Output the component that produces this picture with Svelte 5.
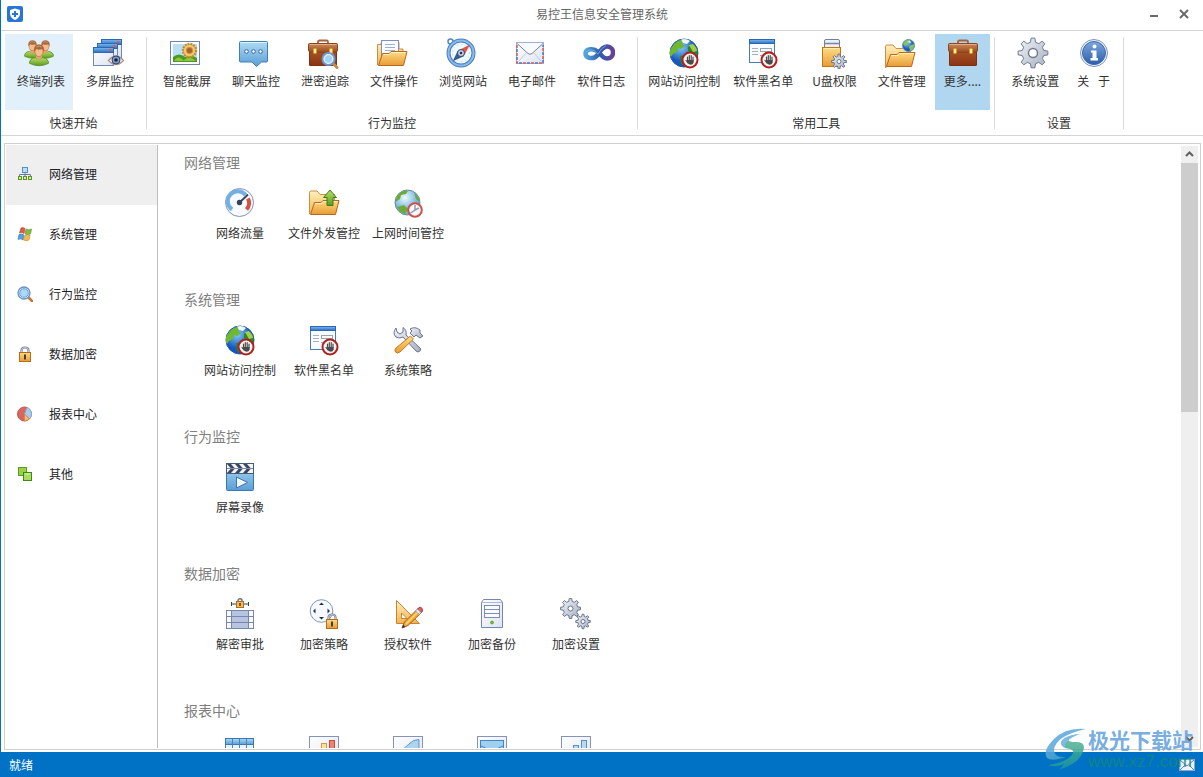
<script>
	const groups = [
		{
			title: '快速开始',
			items: [
				{ icon: 'users', label: '终端列表', state: 'hot' },
				{ icon: 'screens', label: '多屏监控' }
			]
		},
		{
			title: '行为监控',
			items: [
				{ icon: 'picture', label: '智能截屏' },
				{ icon: 'chat', label: '聊天监控' },
				{ icon: 'caseSearch', label: '泄密追踪' },
				{ icon: 'folderDoc', label: '文件操作' },
				{ icon: 'compass', label: '浏览网站' },
				{ icon: 'mail', label: '电子邮件' },
				{ icon: 'infinity', label: '软件日志' }
			]
		},
		{
			title: '常用工具',
			items: [
				{ icon: 'globeStop', label: '网站访问控制', fit: 'tight' },
				{ icon: 'windowStop', label: '软件黑名单', fit: 'tight' },
				{ icon: 'usb', label: 'U盘权限' },
				{ icon: 'folderGlobe', label: '文件管理' },
				{ icon: 'case', label: '更多....', fit: 'even', state: 'active' }
			]
		},
		{
			title: '设置',
			items: [
				{ icon: 'gear', label: '系统设置' },
				{ icon: 'info', label: '关\u2002 于', fit: 'even' }
			]
		}
	];

	const sections = [
		{
			title: '网络管理',
			icon: 'network',
			items: [
				{ icon: 'gauge', label: '网络流量' },
				{ icon: 'folderUp', label: '文件外发管控' },
				{ icon: 'globeClock', label: '上网时间管控' }
			]
		},
		{
			title: '系统管理',
			icon: 'flag',
			items: [
				{ icon: 'globeStop', label: '网站访问控制' },
				{ icon: 'windowStop', label: '软件黑名单' },
				{ icon: 'tools', label: '系统策略' }
			]
		},
		{
			title: '行为监控',
			icon: 'search',
			items: [{ icon: 'clapper', label: '屏幕录像' }]
		},
		{
			title: '数据加密',
			icon: 'lock',
			items: [
				{ icon: 'lockTable', label: '解密审批' },
				{ icon: 'lockPolicy', label: '加密策略' },
				{ icon: 'ruler', label: '授权软件' },
				{ icon: 'server', label: '加密备份' },
				{ icon: 'gears', label: '加密设置' }
			]
		},
		{
			title: '报表中心',
			icon: 'pie',
			items: [
				{ icon: 'table', label: '' },
				{ icon: 'barsWarm', label: '' },
				{ icon: 'area', label: '' },
				{ icon: 'mailChart', label: '' },
				{ icon: 'barsBlue', label: '' }
			]
		}
	];

	const tabs = [...sections.map(({ title, icon }) => ({ title, icon })), { title: '其他', icon: 'squares' }];

	let selected = $state(0);
	let pane;

	function scroll(dy) {
		pane.scrollBy({ top: dy });
	}

	function cog(cx, cy, outer, inner, teeth) {
		const pts = [];
		const step = (Math.PI * 2) / teeth;
		for (let i = 0; i < teeth; i++) {
			const a = i * step - Math.PI / 2;
			for (const [k, r] of [[-0.3, inner], [-0.16, outer], [0.16, outer], [0.3, inner]]) {
				pts.push(`${(cx + r * Math.cos(a + k * step)).toFixed(2)},${(cy + r * Math.sin(a + k * step)).toFixed(2)}`);
			}
		}
		return pts.join(' ');
	}
</script>

{#snippet briefcase()}
	<path d="M11 7V5Q11 3.500 12.500 3.500H19.500Q21 3.500 21 5V7" fill="none" stroke="#a5633c" stroke-width="1.800" />
	<path d="M2.500 14H29.500V28Q29.500 28.500 29 28.500H3Q2.500 28.500 2.500 28Z" fill="url(#leather)" stroke="#7d3013" />
	<path d="M1.500 7.500Q1.500 6.500 2.500 6.500H29.500Q30.500 6.500 30.500 7.500V13Q30.500 15.500 27 15.500H5Q1.500 15.500 1.500 13Z" fill="url(#flap)" stroke="#8b4521" />
	<path d="M3 7.500H29" stroke="#e6ab7e" />
	<rect x="6.500" y="11.500" width="3" height="5" rx="1" fill="#fff0a0" stroke="#e39a20" />
	<rect x="22.500" y="11.500" width="3" height="5" rx="1" fill="#fff0a0" stroke="#e39a20" />
{/snippet}

{#snippet person(x, y, s)}
	<g transform="translate({x} {y}) scale({s})">
		<path d="M-10 14Q-10 9 -4 8L0 10L4 8Q10 9 10 14Q5 16.500 0 16.500T-10 14Z" fill="url(#green)" stroke="#5c9028" />
		<path d="M-3 5V8.500L0 11L3 8.500V5Z" fill="#e9a36e" />
		<ellipse cx="0" cy="1.500" rx="4.300" ry="5.500" fill="#f5bd8d" stroke="#b3744a" stroke-width=".7" />
		<path d="M-5 2Q-6.500 -5.500 0 -6Q6.500 -5.500 5 2L3.500 -1Q0 .5 -3 -1Z" fill="#a9683c" />
		<path d="M-3 -3Q0 -5.500 3 -3" fill="none" stroke="#d09a6c" />
	</g>
{/snippet}

{#snippet stop()}
	<circle cx="22" cy="23" r="7.500" fill="#f4f4f4" stroke="#b2201c" stroke-width="2" />
	<path d="M19.500 24V20M21.300 23V18.500M23.200 23V18.700M25 24V20M18 23.500L20 26" stroke="#4a4a4a" stroke-width="1.200" stroke-linecap="round" />
	<path d="M19 23H25.600V25.500Q25 27.800 22.500 27.800Q20.500 27.500 19 25Z" fill="#4a4a4a" />
{/snippet}

{#snippet padlock(x, y)}
	<g transform="translate({x} {y})">
		<path d="M2.500 6V4.500Q2.500 1.500 6 1.500T9.500 4.500V6" fill="none" stroke="#76839c" stroke-width="2.200" />
		<path d="M2.500 6V4.500Q2.500 1.500 6 1.500T9.500 4.500V6" fill="none" stroke="#d3dae6" stroke-width=".8" />
		<rect x=".5" y="6.500" width="11" height="9" fill="url(#gold)" stroke="#b56a16" />
		<rect x="5" y="8.500" width="2" height="5" fill="#443d38" />
	</g>
{/snippet}

{#snippet folderBack()}
	<path d="M1.500 28V6.500Q1.500 5 3 5H9L12 8.500H26.500V16" fill="url(#paleGold)" stroke="#cf8d42" />
{/snippet}

{#snippet folderFront()}
	<path d="M6.500 16.500H13L15 14.500H31L27.500 28.500H2.500Z" fill="url(#gold)" stroke="#b9671c" stroke-linejoin="round" />
	<path d="M7.500 17.500H13.500L15.500 15.500H29.500" fill="none" stroke="#fff0bd" />
{/snippet}

{#snippet icon(name)}
	<svg class="icon" viewBox="0 0 32 32" aria-hidden="true">
		{#if name === 'users'}
			{@render person(9.5, 8, 0.8)}
			{@render person(22.5, 8, 0.8)}
			{@render person(16, 13, 0.95)}
		{:else if name === 'screens'}
			{#each [[9, 2], [5, 6], [1, 10]] as [x, y]}
				<rect x={x + 0.5} y={y + 0.5} width="20" height="18" fill="url(#paper)" stroke="#6c8ab4" />
				<rect x={x + 0.5} y={y + 0.5} width="20" height="5" fill="url(#bar)" stroke="#2b68b8" />
				<rect x={x + 16} y={y + 2} width="2.500" height="2" fill="#f0563a" />
			{/each}
			<path d="M16.500 23.500Q24 14.500 31.500 23.500Q24 31.500 16.500 23.500Z" fill="#eef2f8" stroke="#a78f86" stroke-width="1.300" />
			<circle cx="24" cy="23" r="4" fill="#7f9ccb" stroke="#344665" />
			<circle cx="24" cy="23" r="1.800" fill="#15223c" />
		{:else if name === 'picture'}
			<rect x="1.500" y="4.500" width="29" height="23" fill="#fff" stroke="#7283ae" />
			<rect x="4" y="7" width="24" height="18" fill="#b9e0f4" />
			<path d="M4 20Q10 15 16 20Q22 17 28 21V25H4Z" fill="#4a9a1f" />
			<path d="M5 24Q9 17 15 24M14 24Q20 17 27 24" fill="#8cc63e" />
			<circle cx="20.500" cy="13.500" r="6.500" fill="#e9b54d" stroke="#c28a35" stroke-width="2.500" stroke-dasharray="1.800 1" />
			<circle cx="20.500" cy="13.500" r="5.500" fill="#f4cb6a" />
			<circle cx="20.500" cy="13.500" r="3.200" fill="#a8642a" stroke="#d3944a" />
		{:else if name === 'chat'}
			<path d="M2.500 4.500H28.500Q29.500 4.500 29.500 5.500V24Q29.500 25 28.500 25H23.500L18.500 29.500L14 25H2.500Q1.500 25 1.500 24V5.500Q1.500 4.500 2.500 4.500Z" fill="url(#sky)" stroke="#3f80b7" />
			<path d="M2.500 5.500H28.500" stroke="#def4fd" />
			{#each [8.5, 15.5, 22.5] as x}
				<circle cx={x} cy="14.500" r="1.800" fill="#fff" stroke="#33669d" />
			{/each}
		{:else if name === 'case'}
			{@render briefcase()}
		{:else if name === 'caseSearch'}
			{@render briefcase()}
			<path d="M26 26.500L30 30.500" stroke="#c88a4c" stroke-width="3" stroke-linecap="round" />
			<circle cx="21.500" cy="22" r="6" fill="#c4ebfd" stroke="#6f97cf" stroke-width="2" />
			<circle cx="21.500" cy="22" r="4.300" fill="#9fd4f5" stroke="#e9f8ff" />
		{:else if name === 'folderDoc'}
			<path d="M1.500 28V7.500H5V5.500H23V12H27V16" fill="url(#paleGold)" stroke="#cf8d42" />
			<rect x="5.500" y="3.500" width="17" height="19" fill="#fafcff" stroke="#7a91c5" />
			<path d="M9 7.500H19M9 10.500H19M9 13.500H19M9 16.500H19" stroke="#9bb0d8" />
			{@render folderFront()}
		{:else if name === 'compass'}
			<circle cx="5.500" cy="4.500" r="2.500" fill="none" stroke="#5688c4" stroke-width="1.500" />
			<circle cx="16" cy="16" r="12.500" fill="#eef8fd" stroke="#4a7fc2" stroke-width="4" />
			<circle cx="16" cy="16" r="12.500" fill="none" stroke="#8bbce8" stroke-width="2" />
			<circle cx="16" cy="16" r="8.500" fill="none" stroke="#b1d4eb" stroke-dasharray="1 3" />
			<path d="M24 8.500L19 18L14 13.500Z" fill="#ef5143" stroke="#c62d24" stroke-width=".6" />
			<path d="M8.500 23.500L13 14L18.500 19Z" fill="#375d96" stroke="#1c3966" stroke-width=".6" />
			<circle cx="16" cy="16" r="3.500" fill="#c5d0e2" stroke="#384a6d" />
			<circle cx="16" cy="16" r="1.300" fill="#26344f" />
		{:else if name === 'mail'}
			<rect x="2.500" y="5.500" width="27" height="21" fill="url(#paper)" stroke="#a3afcf" />
			<path d="M3 8V26H29V8" fill="none" stroke="#db5a54" stroke-width="1.500" stroke-dasharray="3 5" />
			<path d="M3 8V26H29V8" fill="none" stroke="#4d78c0" stroke-width="1.500" stroke-dasharray="3 5" stroke-dashoffset="-4" />
			<path d="M5 24L12 16M27 24L20 16" stroke="#c3cbe0" />
			<path d="M3 6.500L14 16.500Q16 18 18 16.500L29 6.500" fill="#fbfcff" stroke="#76829f" />
		{:else if name === 'infinity'}
			<path d="M14.500 14.500C11 11 2.500 11.500 2.500 16.500C2.500 22 11 22.500 14.500 18C18 13 20 9.500 24 9.500C28 9.500 30 12.500 30 15.500C30 19 27.500 21.500 24 21.500C20 21.500 18 18 15.500 15" fill="none" stroke="url(#violet)" stroke-width="4.500" stroke-linecap="round" stroke-linejoin="round" />
			<path d="M3 15Q6 11.500 11 13.500L15 17Q18 11 23 8.500" fill="none" stroke="#97c8f2" stroke-opacity=".6" />
		{:else if name === 'globeStop'}
			<circle cx="16" cy="16" r="14" fill="url(#ocean)" stroke="#1d55ad" />
			<path d="M4 10Q8 3 15 3L14 7L17 9L13 12L10 11L9 15L5 17L3 20Q0 15 4 10Z" fill="#70b82c" />
			<path d="M13 2.500Q18 1 22 4L19 7L15 6Z" fill="#eff8e7" />
			<path d="M20 10L25 7Q31 12 29.500 18L24 17L20 14ZM12 19L18 18L21 22L17 29L13 27Z" fill="#2f8424" />
			<path d="M21 8L25 7Q29 11 29 14L25 15Z" fill="#a0cf4b" />
			{@render stop()}
		{:else if name === 'windowStop'}
			<rect x="2.500" y="2.500" width="25" height="23" fill="#f9fcff" stroke="#477ab6" />
			<rect x="2.500" y="2.500" width="25" height="4" fill="url(#bar)" stroke="#2866b6" />
			<path d="M5 11.500H11M5 14.500H11M5 17.500H11" stroke="#a9b0bb" />
			<rect x="13.500" y="11.500" width="11" height="3" fill="#fff" stroke="#9aa2b0" />
			<path d="M13 18.500H17" stroke="#9aa2b0" />
			{@render stop()}
		{:else if name === 'usb'}
			<rect x="7.500" y="2.500" width="15" height="9" rx="1.500" fill="#edf0f5" stroke="#7180a0" />
			<path d="M8 6.500H22" stroke="#7585a7" stroke-width="1.500" />
			<rect x="5.500" y="10.500" width="18" height="19" fill="url(#gold)" stroke="#c27812" />
			<path d="M7 11.500H22" stroke="#fff0af" />
			<polygon points={cog(22, 24.5, 7.5, 5, 8)} fill="url(#steel)" stroke="#6a7691" />
			<circle cx="22" cy="24.500" r="2" fill="#fff" stroke="#6a7691" />
		{:else if name === 'folderGlobe'}
			<g transform="translate(0 3)">{@render folderBack()}</g>
			<circle cx="24.500" cy="8.500" r="6" fill="url(#ocean)" stroke="#5d93b4" />
			<path d="M19 7Q22 2 26 3L24 7L21 9ZM25 9L30 7Q31 12 26 14Z" fill="#8cc05a" />
			<path d="M23 5L26 3.500L27 6Z" fill="#e5f2d8" />
			<g transform="translate(0 1)">{@render folderFront()}</g>
		{:else if name === 'gear'}
			<polygon points={cog(16, 16, 15, 11, 8)} fill="url(#steel)" stroke="#727b8e" stroke-linejoin="round" />
			<circle cx="16" cy="16" r="4.500" fill="#fff" stroke="#727b8e" stroke-width="1.500" />
		{:else if name === 'info'}
			<circle cx="16" cy="16" r="13.500" fill="#eff3fa" stroke="#7f93c1" />
			<circle cx="16" cy="16" r="11.500" fill="url(#infoBlue)" stroke="#3c69ad" />
			<circle cx="16.500" cy="9.500" r="2" fill="#fff" />
			<path d="M13 13.500H18.500V21H20V23.500H12.500V21H14.500V15.500H13Z" fill="#fff" />
		{:else if name === 'gauge'}
			<circle cx="15.500" cy="15.500" r="14" fill="#f7faff" stroke="#8493b9" />
			<path d="M8 22.500A10 10 0 1 1 21.500 8" fill="none" stroke="#72afe3" stroke-width="4" />
			<path d="M24 11.500A10 10 0 0 1 22.500 22.500" fill="none" stroke="#d75043" stroke-width="4" />
			<path d="M15.500 15.500L24 7.500" stroke="#384761" stroke-width="2" />
			<circle cx="15.500" cy="15.500" r="2.700" fill="#35425c" />
		{:else if name === 'folderUp'}
			<g transform="translate(0 -1)">{@render folderBack()}{@render folderFront()}</g>
			<path d="M22 3L28.500 10.500H25V18.500H19V10.500H15.500Z" fill="url(#green)" stroke="#3f7e17" stroke-linejoin="round" />
		{:else if name === 'globeClock'}
			<circle cx="15.500" cy="15.500" r="12.500" fill="url(#paleOcean)" stroke="#628a9f" />
			<path d="M5 9Q10 3 16 4L14 7L9 8L8 12L3.500 15ZM22 6Q27 9 27.500 15L24 12ZM5 20L12 18L16 22L13 27Q7 25 5 20Z" fill="#6eaa36" />
			<circle cx="23" cy="23" r="6.800" fill="#faf8fb" stroke="#c9524e" stroke-width="2" />
			<path d="M23 18V23L18.500 26M23 23L27 21" fill="none" stroke="#8e9cb5" stroke-width="1.500" />
		{:else if name === 'tools'}
			<path d="M4 4Q0 9 4 13Q7 15 11 13L24 27Q26 29 28 27T27 23L14 11Q15 6 11 3.500L11 8L8 10L5 8Z" fill="url(#steel)" stroke="#6b7590" />
			<path d="M18 5Q23 2 28 6L28 9L31 12L28 14L24 11L22 13L18 9L20 7Z" fill="url(#steel)" stroke="#6b7590" stroke-linejoin="round" />
			<path d="M18.500 12L21.500 15L8 28Q5 30 3.500 28T4 24Z" fill="url(#gold)" stroke="#c57b19" />
		{:else if name === 'clapper'}
			<rect x="2.500" y="2.500" width="27" height="27" rx="1" fill="url(#sky)" stroke="#3977b2" />
			<rect x="2.500" y="2.500" width="27" height="10" fill="#f2f5fa" stroke="#465a7b" />
			{#each [3, 11, 19] as x}
				<path d="M{x} 3H{x + 4}L{x + 8} 7.500L{x + 4} 12H{x}L{x + 4} 7.500Z" fill="#3b475f" />
			{/each}
			<path d="M3 7.500H29" stroke="#7f8da8" />
			<path d="M12.500 16V27L23.500 21.500Z" fill="#f3f8fd" stroke="#3b74b1" />
		{:else if name === 'lockTable'}
			<rect x="2.500" y="12.500" width="27" height="18" fill="#f8faff" stroke="#7386b0" />
			<rect x="7.500" y="12.500" width="17" height="18" fill="#b7c4df" stroke="#7386b0" />
			<path d="M2 18.500H30M2 24.500H30" stroke="#7386b0" />
			<path d="M7.500 4V8M24.500 4V8M8 6H12M20 6H24" stroke="#344057" />
			<path d="M14 4V2.500Q14 .8 16 .8T18 2.500V4" fill="none" stroke="#6b7788" stroke-width="1.500" />
			<rect x="12.500" y="3.500" width="7" height="6" fill="#f3bc5d" stroke="#b76a18" />
			<path d="M16 5V8" stroke="#443d38" stroke-width="1.500" />
		{:else if name === 'lockPolicy'}
			<circle cx="13.500" cy="13" r="11.300" fill="#f6f9ff" stroke="#8495bb" />
			<path d="M11 7H16L13.500 4.500ZM11 19H16L13.500 21.500ZM7.500 10.500V15.500L5 13ZM19.500 10.500V15.500L22 13Z" fill="#253148" />
			{@render padlock(18, 15)}
		{:else if name === 'ruler'}
			<path d="M4.500 2.500V25.500H27.500ZM9.500 15V20.500H15Z" fill="url(#paleGold)" fill-rule="evenodd" stroke="#c78437" />
			<path d="M10 30L12.500 24L26 10.500Q29.500 9 30 14L16 27.500Z" fill="#f1aa35" stroke="#a45e28" />
			<path d="M14 26L26 14" stroke="#ffd97a" stroke-width="1.500" />
			<path d="M25.500 11L27 9.500Q30.500 8.500 30.500 13L29 14.500Z" fill="#db635d" stroke="#a93e40" />
			<path d="M23.500 13L25.500 11L29 14.500L27.500 16.500Z" fill="#dfe4ee" stroke="#8b94ab" stroke-width=".6" />
			<path d="M10 30L11 26.500L13.500 29Z" fill="#31394c" />
		{:else if name === 'server'}
			<path d="M5.500 4.500L7.500 1.500H24.500L26.500 4.500V29.500H5.500Z" fill="url(#paper)" stroke="#7586b0" />
			<path d="M6 4.500H26" stroke="#adb9d5" />
			<rect x="8.500" y="7.500" width="15" height="12" fill="#f9fbff" stroke="#7e8db5" />
			<path d="M9 11.500H23M9 15.500H23" stroke="#7e8db5" />
			<circle cx="16" cy="24.500" r="1.500" fill="#7dbf2b" stroke="#4e8a1a" stroke-width=".6" />
		{:else if name === 'gears'}
			<polygon points={cog(10.5, 10.5, 10, 7.3, 8)} fill="url(#steel)" stroke="#69748d" />
			<circle cx="10.500" cy="10.500" r="2.500" fill="#fff" stroke="#69748d" />
			<polygon points={cog(23, 23.5, 7.3, 5.2, 8)} fill="url(#steel)" stroke="#69748d" />
			<circle cx="23" cy="23.500" r="2" fill="#fff" stroke="#69748d" />
		{:else if name === 'table'}
			<rect x="1.500" y="3.500" width="28" height="26" fill="#e8f4fc" stroke="#417cb9" />
			<rect x="1.500" y="3.500" width="28" height="6" fill="url(#sky)" stroke="#3977b8" />
			<path d="M8.500 4V29M15.500 4V29M22.500 4V29M2 16.500H29M2 22.500H29" stroke="#4884bd" />
		{:else}
			<rect x="1.500" y="1.500" width="29" height="28" fill="url(#paper)" stroke="#8492bc" />
			{#if name === 'barsWarm'}
				<rect x="5.500" y="13.500" width="5" height="13" fill="#a9d36a" stroke="#74a536" />
				<rect x="13.500" y="8.500" width="5" height="18" fill="#ffe09a" stroke="#d09b42" />
				<rect x="21.500" y="5.500" width="5" height="21" fill="#ef8078" stroke="#c94840" />
			{:else if name === 'barsBlue'}
				<rect x="5.500" y="15.500" width="5" height="11" fill="#b8dbf3" stroke="#5b8fc4" />
				<rect x="13.500" y="10.500" width="5" height="16" fill="#b8dbf3" stroke="#5b8fc4" />
				<rect x="21.500" y="5.500" width="5" height="21" fill="#b8dbf3" stroke="#5b8fc4" />
			{:else if name === 'area'}
				<path d="M4 26V17Q12 15 17 9Q21 4.500 27 4.500V26Z" fill="#add4ef" stroke="#5d97c8" />
			{:else}
				<rect x="4.500" y="5.500" width="23" height="20" fill="#9fd1ef" stroke="#4685c3" />
				<path d="M5 11L16 16L27 11" fill="none" stroke="#4685c3" />
			{/if}
		{/if}
	</svg>
{/snippet}

{#snippet smallIcon(name)}
	<svg class="small" viewBox="0 0 16 16" aria-hidden="true">
		{#if name === 'network'}
			<path d="M8 6V9M2.500 11V8.500H13.500V11M8 8V11" fill="none" stroke="#6e7c92" />
			<rect x="5.500" y="1.500" width="5" height="5" fill="#b8e1ff" stroke="#4f90d4" />
			<rect x="1.500" y="10.500" width="3" height="3" fill="#d2f1a2" stroke="#5c9428" />
			<rect x="6.500" y="10.500" width="3" height="3" fill="#d2f1a2" stroke="#5c9428" />
			<rect x="11.500" y="10.500" width="3" height="3" fill="#d2f1a2" stroke="#5c9428" />
		{:else if name === 'flag'}
			<path d="M4 2Q6 1 8 2.500L7 7.500Q5 6 2.500 7Z" fill="#e45848" stroke="#b83b31" stroke-width=".6" />
			<path d="M9 3Q11.500 4.500 14.500 3L13.500 8Q11 9 8 8Z" fill="#82bd3a" stroke="#5a8e25" stroke-width=".6" />
			<path d="M2 8.500Q4 7.500 7 9L6 14Q3.500 12 1 13.500Z" fill="#4fa1e5" stroke="#3773b6" stroke-width=".6" />
			<path d="M8 9Q10 10.500 13 9L12 14Q9.500 15.500 6.500 14Z" fill="#f8b94b" stroke="#c7852d" stroke-width=".6" />
		{:else if name === 'search'}
			<path d="M11.500 11.500L15 15" stroke="#c57735" stroke-width="2.500" stroke-linecap="round" />
			<circle cx="7" cy="7" r="6" fill="#e6f7ff" stroke="#6c8fc8" stroke-width="1.300" />
			<circle cx="7" cy="7" r="4.300" fill="#a9dafa" stroke="#7099d0" />
		{:else if name === 'lock'}
			<g transform="translate(2 0)">{@render padlock(0, 0)}</g>
		{:else if name === 'pie'}
			<circle cx="7.500" cy="8" r="7" fill="#d9665e" stroke="#b85d58" />
			<path d="M7.500 8L10 1.500A7 7 0 0 1 12.500 13Z" fill="#a4cdee" stroke="#8aa9c8" stroke-width=".7" />
			<path d="M7.500 8L12.500 13Q10 15 7.500 15Z" fill="#f5ba72" stroke="#cf854c" stroke-width=".7" />
		{:else}
			<rect x="1.500" y="1.500" width="8" height="8" fill="#9bd03f" stroke="#5a9e2a" />
			<rect x="6.500" y="6.500" width="8" height="8" fill="#a9dc5c" stroke="#3b8b1c" />
			<path d="M8 8H13" stroke="#ddf4ae" />
		{/if}
	</svg>
{/snippet}

<svg class="defs" aria-hidden="true">
	<defs>
		<linearGradient id="leather" x2="0" y2="1"><stop stop-color="#a95227" /><stop offset="1" stop-color="#8a3512" /></linearGradient>
		<linearGradient id="flap" x2="0" y2="1"><stop stop-color="#d18a58" /><stop offset="1" stop-color="#96491f" /></linearGradient>
		<linearGradient id="green" x2="0" y2="1"><stop stop-color="#b9df64" /><stop offset="1" stop-color="#5c9c24" /></linearGradient>
		<linearGradient id="gold" x2="0" y2="1"><stop stop-color="#ffdc85" /><stop offset="1" stop-color="#e89b35" /></linearGradient>
		<linearGradient id="paleGold" x2="0" y2="1"><stop stop-color="#fff0bd" /><stop offset="1" stop-color="#f0b451" /></linearGradient>
		<linearGradient id="paper" x2="1" y2="1"><stop stop-color="#fff" /><stop offset="1" stop-color="#dce3f1" /></linearGradient>
		<linearGradient id="bar" x2="0" y2="1"><stop stop-color="#82b9ee" /><stop offset="1" stop-color="#276fc4" /></linearGradient>
		<linearGradient id="sky" x2="0" y2="1"><stop stop-color="#aedbf4" /><stop offset="1" stop-color="#5b9ed5" /></linearGradient>
		<linearGradient id="steel" x2="1" y2="1"><stop stop-color="#f0f3f8" /><stop offset="1" stop-color="#a7b0c1" /></linearGradient>
		<linearGradient id="violet"><stop stop-color="#51a6dc" /><stop offset=".5" stop-color="#2f5fb0" /><stop offset="1" stop-color="#684099" /></linearGradient>
		<linearGradient id="infoBlue" x2="0" y2="1"><stop stop-color="#7ca8de" /><stop offset="1" stop-color="#2d5cab" /></linearGradient>
		<linearGradient id="swirl" x2="1" y2="1"><stop stop-color="#5ba6e5" /><stop offset=".5" stop-color="#5aa6d8" /><stop offset="1" stop-color="#18a06c" /></linearGradient>
		<linearGradient id="swirlGreen" x2="0" y2="1"><stop stop-color="#5cba8c" /><stop offset="1" stop-color="#1d96a0" /></linearGradient>
		<radialGradient id="ocean" cx=".4" cy=".3"><stop stop-color="#83cbf5" /><stop offset="1" stop-color="#1657bd" /></radialGradient>
		<radialGradient id="paleOcean" cx=".4" cy=".3"><stop stop-color="#edfaff" /><stop offset="1" stop-color="#75b4db" /></radialGradient>
	</defs>
</svg>

<div class="window">
	<header>
		<svg class="logo" viewBox="0 0 16 16" aria-hidden="true">
			<rect width="16" height="16" rx="2" fill="#2877d4" />
			<path d="M8 2.500L13 4V8Q12.500 12 8 14Q3.500 12 3 8V4Z" fill="#fff" />
			<path d="M8 5V11M5 8H11" stroke="#2877d4" stroke-width="2" />
		</svg>
		<h1>易控王信息安全管理系统</h1>
		<div class="controls">
			<button aria-label="最小化"><svg viewBox="0 0 12 12"><path d="M2 8H10" /></svg></button>
			<button aria-label="关闭"><svg viewBox="0 0 12 12"><path d="M2 2L10 10M10 2L2 10" /></svg></button>
		</div>
	</header>

	<nav class="ribbon">
		{#each groups as group}
			<section class="group">
				<div class="commands">
					{#each group.items as item}
						<button class="command {item.state ?? ''} {item.fit ?? ''}">
							{@render icon(item.icon)}
							<span>{item.label}</span>
						</button>
					{/each}
				</div>
				<div class="caption">{group.title}</div>
			</section>
		{/each}
	</nav>

	<main>
		<aside>
			{#each tabs as tab, i}
				<button class="tab" class:selected={selected === i} onclick={() => (selected = i)}>
					{@render smallIcon(tab.icon)}
					<span>{tab.title}</span>
				</button>
			{/each}
		</aside>

		<div class="pane" bind:this={pane}>
			{#each sections as section}
				<section class="block">
					<h2>{section.title}</h2>
					<div class="tiles">
						{#each section.items as item}
							<button class="tile">
								{@render icon(item.icon)}
								<span>{item.label}</span>
							</button>
						{/each}
					</div>
				</section>
			{/each}
		</div>

		<div class="scrollbar">
			<button aria-label="向上滚动" onclick={() => scroll(-137)}><svg viewBox="0 0 17 17"><path d="M5 10L8.500 6.500L12 10" /></svg></button>
			<div class="track"><div class="thumb"></div></div>
			<button aria-label="向下滚动" onclick={() => scroll(137)}><svg viewBox="0 0 17 17"><path d="M5 7L8.500 10.500L12 7" /></svg></button>
		</div>
	</main>

	<footer>
		<span>就绪</span>
		<svg viewBox="0 0 16 12" aria-hidden="true">
			<rect x=".5" y=".5" width="15" height="11" fill="#edf2fb" stroke="#8ea4c7" />
			<path d="M1 1L8 7L15 1M1 11L6 6M15 11L10 6" fill="none" stroke="#6a7d9f" />
		</svg>
	</footer>

	<div class="watermark">
		<svg viewBox="0 0 44 42" aria-hidden="true">
			<path d="M42 1Q22 -1 10 11Q-2 23 3 30Q8 34 22 29Q10 30 10 22Q11 8 42 1Z" fill="url(#swirl)" />
			<path d="M36 6Q18 8 17 15Q17 20 26 21Q32 23 27 28Q20 35 4 37Q12 40 20 36L16 41Q32 37 38 26Q44 14 32 14Q23 14 25 11Q27 8 36 6Z" fill="url(#swirlGreen)" />
			<path d="M36 6Q18 8 17 15Q17 18 21 19Q20 12 36 6Z" fill="#6aade4" />
		</svg>
		<div>
			<strong>极光下载站</strong>
			<span>www.xz7.com</span>
		</div>
	</div>
</div>

<style>
	:global(body) {
		margin: 0;
	}

	.window {
		position: relative;
		box-sizing: border-box;
		display: flex;
		flex-direction: column;
		height: 100vh;
		overflow: hidden;
		border-left: 1px solid #0072c6;
		background: #fff;
		color: #333;
		font: 12px/16px 'Noto Sans CJK SC', sans-serif;
	}

	button {
		padding: 0;
		border: 0;
		background: none;
		color: inherit;
		font: inherit;
	}

	.defs {
		position: absolute;
		width: 0;
		height: 0;
	}

	.icon {
		display: block;
		width: 32px;
		height: 32px;
	}

	header {
		display: grid;
		grid-template-columns: 1fr auto 1fr;
		align-items: center;
		flex: none;
		box-sizing: border-box;
		height: 31px;
		padding: 0 6px 2px;
		border-bottom: 1px solid #d5d5d5;
	}

	.logo {
		width: 16px;
		height: 16px;
	}

	h1 {
		margin: 0;
		font-size: 12px;
		font-weight: 400;
		color: #666;
	}

	.controls {
		display: flex;
		justify-content: flex-end;
		gap: 18px;
		padding-right: 7px;
	}

	.controls button,
	.controls svg {
		display: block;
		width: 12px;
		height: 12px;
	}

	.controls path {
		fill: none;
		stroke: #6a6a6a;
		stroke-width: 2;
	}

	/* ribbon */
	.ribbon {
		display: flex;
		flex: none;
		height: 104px;
		border-bottom: 1px solid #d5d5d5;
	}

	.group {
		position: relative;
		display: flex;
		flex-direction: column;
		justify-content: space-between;
		padding: 3px 5px 4px 4px;
	}

	.group::after {
		content: '';
		position: absolute;
		right: 0;
		top: 6px;
		bottom: 6px;
		width: 1px;
		background: #dcdcdc;
	}

	.commands {
		display: flex;
		gap: 1px;
	}

	.command {
		display: flex;
		flex-direction: column;
		align-items: center;
		gap: 4px;
		height: 76px;
		padding-top: 3px;
		white-space: nowrap;
	}

	.command span {
		padding: 0 8px 0 12px;
	}

	.command.tight span {
		padding: 0 6px;
	}

	.command.even span {
		padding: 0 9px;
	}

	.command.hot {
		background: #e1f0fa;
	}

	.command.active {
		background: #b1d6f0;
	}

	.caption {
		text-align: center;
	}

	/* work area */
	main {
		display: flex;
		flex: 1;
		min-height: 0;
		margin: 7px 2px 2px 3px;
		padding: 1px;
		border: 1px solid #d0d0d0;
	}

	aside {
		flex: none;
		width: 151px;
		border-right: 1px solid #bdbdbd;
	}

	.tab {
		display: flex;
		align-items: center;
		gap: 16px;
		width: 100%;
		height: 60px;
		padding: 0 0 2px 11px;
		color: #1e1e28;
	}

	.tab.selected {
		background: #efefef;
	}

	.small {
		width: 16px;
		height: 16px;
	}

	.pane {
		flex: 1;
		overflow-y: auto;
		scrollbar-width: none;
		padding: 7px 0 0 26px;
	}

	.block {
		height: 137px;
	}

	h2 {
		margin: 0 0 15px;
		font-size: 14px;
		line-height: 20px;
		font-weight: 400;
		color: #808080;
	}

	.tiles {
		display: flex;
		padding-left: 14px;
	}

	.tile {
		display: flex;
		flex-direction: column;
		align-items: center;
		gap: 6px;
		width: 84px;
		white-space: nowrap;
	}

	.scrollbar {
		display: flex;
		flex-direction: column;
		width: 17px;
		margin: 1px;
		background: #efefef;
	}

	.scrollbar button,
	.scrollbar svg {
		display: block;
		width: 17px;
		height: 17px;
	}

	.scrollbar path {
		fill: none;
		stroke: #606060;
		stroke-width: 2;
	}

	.track {
		flex: 1;
	}

	.thumb {
		height: 44%;
		background: #cdcdcd;
	}

	footer {
		display: flex;
		flex: none;
		align-items: center;
		justify-content: space-between;
		height: 25px;
		padding: 0 8px;
		background: #0072c6;
		color: #fff;
	}

	footer svg {
		width: 16px;
		height: 12px;
	}

	.watermark {
		position: absolute;
		right: 10px;
		bottom: 7px;
		display: flex;
		align-items: flex-end;
		pointer-events: none;
		opacity: 0.85;
	}

	.watermark svg {
		width: 44px;
		height: 42px;
	}

	.watermark strong,
	.watermark span {
		display: block;
	}

	.watermark strong {
		font-size: 21px;
		line-height: 30px;
		font-weight: 700;
		color: #62a0dc;
	}

	.watermark span {
		font: 17px/16px 'Liberation Sans', sans-serif;
		color: #12897e;
	}
</style>
